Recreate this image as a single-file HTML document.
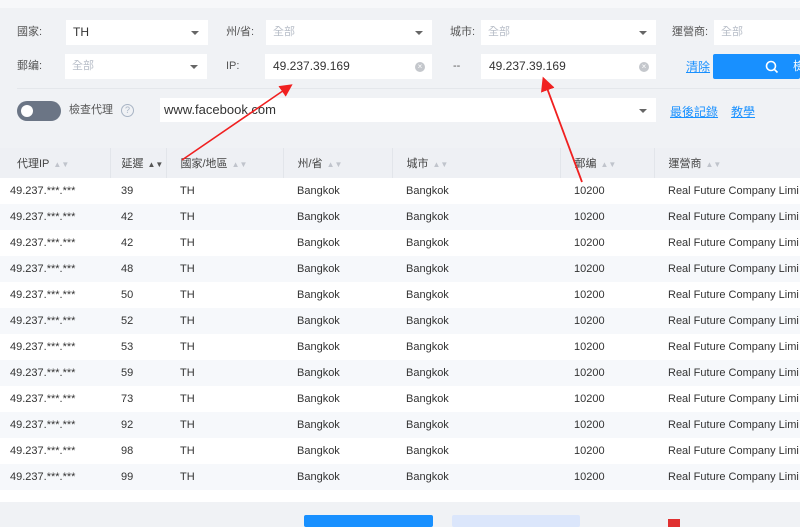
<!DOCTYPE html>
<html><head><meta charset="utf-8"><style>
*{margin:0;padding:0;box-sizing:border-box}
body{width:800px;height:524px;overflow:hidden;background:#f0f2f5;font-family:"Liberation Sans","Noto Sans CJK TC",sans-serif;font-size:11px;color:#333;position:relative}
.a{position:absolute}
.lbl{position:absolute;font-size:11px;color:#555;line-height:13px}
.in{position:absolute;background:#fff;height:25px;line-height:25px;padding-left:7px;font-size:11px;color:#333}
.ph{color:#b8bec8}
.car{position:absolute;right:9px;top:11px;border-left:4px solid transparent;border-right:4px solid transparent;border-top:4px solid #666}
.clr{position:absolute;right:7px;top:8px;width:10px;height:10px;border-radius:50%;background:#c4c7cc;color:#fff;font-size:8px;line-height:10px;text-align:center}
.lnk{position:absolute;color:#1890ff;text-decoration:underline;font-size:12px;line-height:14px}
table{position:absolute;left:0;top:148px;width:800px;border-collapse:collapse;background:#fff}
th{height:30px;background:#eef0f4;font-weight:normal;text-align:left;color:#444;font-size:11px;border-right:1px solid #e2e5ea;padding-left:14px}
td{height:26px;padding-left:14px;font-size:11px;color:#333}
th:first-child{padding-left:17px}
td:first-child{padding-left:10px}
td:nth-child(2),th:nth-child(2){padding-left:11px}
tr:nth-child(odd) td{background:#f6f8fb}
.s{color:#c0c4cc;font-size:8px;margin-left:4px}
</style></head><body>
<div class="a" style="left:0;top:0;width:800px;height:8px;background:#f7f8fa"></div>
<div class="lbl" style="left:17px;top:26px">國家:</div>
<div class="in" style="left:66px;top:20px;width:142px;font-size:12px">TH<span class="car"></span></div>
<div class="lbl" style="left:226px;top:26px">州/省:</div>
<div class="in ph" style="left:266px;top:20px;width:166px">全部<span class="car"></span></div>
<div class="lbl" style="left:450px;top:26px">城市:</div>
<div class="in ph" style="left:481px;top:20px;width:175px">全部<span class="car"></span></div>
<div class="lbl" style="left:672px;top:26px">運營商:</div>
<div class="in ph" style="left:714px;top:20px;width:86px">全部</div>
<div class="lbl" style="left:17px;top:60px">郵编:</div>
<div class="in ph" style="left:65px;top:54px;width:142px">全部<span class="car"></span></div>
<div class="lbl" style="left:226px;top:60px">IP:</div>
<div class="in" style="left:265px;top:54px;width:167px;font-size:12px;padding-left:8px">49.237.39.169<span class="clr">×</span></div>
<div class="lbl" style="left:453px;top:60px">--</div>
<div class="in" style="left:481px;top:54px;width:175px;font-size:12px;padding-left:8px">49.237.39.169<span class="clr">×</span></div>
<div class="lnk" style="left:686px;top:60px">清除</div>
<div class="a" style="left:713px;top:54px;width:87px;height:25px;background:#1890ff;border-radius:2px;color:#fff;font-size:12px;line-height:25px"><svg class="a" style="left:52px;top:6px" width="14" height="14" viewBox="0 0 14 14"><circle cx="6" cy="6" r="4.5" fill="none" stroke="#fff" stroke-width="1.6"/><path d="M9.3 9.3L12.5 12.5" stroke="#fff" stroke-width="1.6"/></svg><span class="a" style="left:80px;top:0">檢</span></div>
<div class="a" style="left:17px;top:88px;width:783px;height:1px;background:#e4e7eb"></div>
<div class="a" style="left:17px;top:101px;width:44px;height:20px;border-radius:10px;background:#6b7585"></div>
<div class="a" style="left:21px;top:105px;width:12px;height:12px;border-radius:50%;background:#fff"></div>
<div class="lbl" style="left:69px;top:104px">檢查代理</div>
<div class="a" style="left:121px;top:104px;width:13px;height:13px;border-radius:50%;border:1px solid #a8b4c4;color:#a8b4c4;font-size:9px;line-height:11px;text-align:center">?</div>
<div class="in" style="left:160px;top:98px;width:496px;height:24px;font-size:13px;line-height:24px;padding-left:4px">www.facebook.com<span class="car"></span></div>
<div class="lnk" style="left:670px;top:105px">最後記錄</div>
<div class="lnk" style="left:731px;top:105px">教學</div>
<table>
<tr><th style="width:110px">代理IP<span class="s">▲▼</span></th><th style="width:56px">延遲<span class="s" style="color:#555">▲▼</span></th><th style="width:117px">國家/地區<span class="s">▲▼</span></th><th style="width:109px">州/省<span class="s">▲▼</span></th><th style="width:168px">城市<span class="s">▲▼</span></th><th style="width:94px">郵编<span class="s">▲▼</span></th><th style="border:0">運營商<span class="s">▲▼</span></th></tr>
<tr><td>49.237.***.***</td><td>39</td><td>TH</td><td>Bangkok</td><td>Bangkok</td><td>10200</td><td>Real Future Company Limi</td></tr>
<tr><td>49.237.***.***</td><td>42</td><td>TH</td><td>Bangkok</td><td>Bangkok</td><td>10200</td><td>Real Future Company Limi</td></tr>
<tr><td>49.237.***.***</td><td>42</td><td>TH</td><td>Bangkok</td><td>Bangkok</td><td>10200</td><td>Real Future Company Limi</td></tr>
<tr><td>49.237.***.***</td><td>48</td><td>TH</td><td>Bangkok</td><td>Bangkok</td><td>10200</td><td>Real Future Company Limi</td></tr>
<tr><td>49.237.***.***</td><td>50</td><td>TH</td><td>Bangkok</td><td>Bangkok</td><td>10200</td><td>Real Future Company Limi</td></tr>
<tr><td>49.237.***.***</td><td>52</td><td>TH</td><td>Bangkok</td><td>Bangkok</td><td>10200</td><td>Real Future Company Limi</td></tr>
<tr><td>49.237.***.***</td><td>53</td><td>TH</td><td>Bangkok</td><td>Bangkok</td><td>10200</td><td>Real Future Company Limi</td></tr>
<tr><td>49.237.***.***</td><td>59</td><td>TH</td><td>Bangkok</td><td>Bangkok</td><td>10200</td><td>Real Future Company Limi</td></tr>
<tr><td>49.237.***.***</td><td>73</td><td>TH</td><td>Bangkok</td><td>Bangkok</td><td>10200</td><td>Real Future Company Limi</td></tr>
<tr><td>49.237.***.***</td><td>92</td><td>TH</td><td>Bangkok</td><td>Bangkok</td><td>10200</td><td>Real Future Company Limi</td></tr>
<tr><td>49.237.***.***</td><td>98</td><td>TH</td><td>Bangkok</td><td>Bangkok</td><td>10200</td><td>Real Future Company Limi</td></tr>
<tr><td>49.237.***.***</td><td>99</td><td>TH</td><td>Bangkok</td><td>Bangkok</td><td>10200</td><td>Real Future Company Limi</td></tr>
<tr><td colspan="7" style="height:12px;background:#fff"></td></tr>
</table>
<div class="a" style="left:304px;top:515px;width:129px;height:12px;background:#1890ff;border-radius:2px"></div>
<div class="a" style="left:452px;top:515px;width:128px;height:12px;background:#dbe6fb;border-radius:2px"></div>
<div class="a" style="left:668px;top:519px;width:12px;height:8px;background:#e03030"></div>
<svg class="a" style="left:0;top:0" width="800" height="524">
<defs><marker id="m" markerWidth="8" markerHeight="8" refX="6" refY="4" orient="auto"><path d="M0,0L8,4L0,8z" fill="#f02020"/></marker></defs>
<line x1="182" y1="160" x2="290" y2="86" stroke="#f02020" stroke-width="1.6" marker-end="url(#m)"/>
<line x1="582" y1="182" x2="544" y2="80" stroke="#f02020" stroke-width="1.8" marker-end="url(#m)"/>
</svg>
</body></html>
